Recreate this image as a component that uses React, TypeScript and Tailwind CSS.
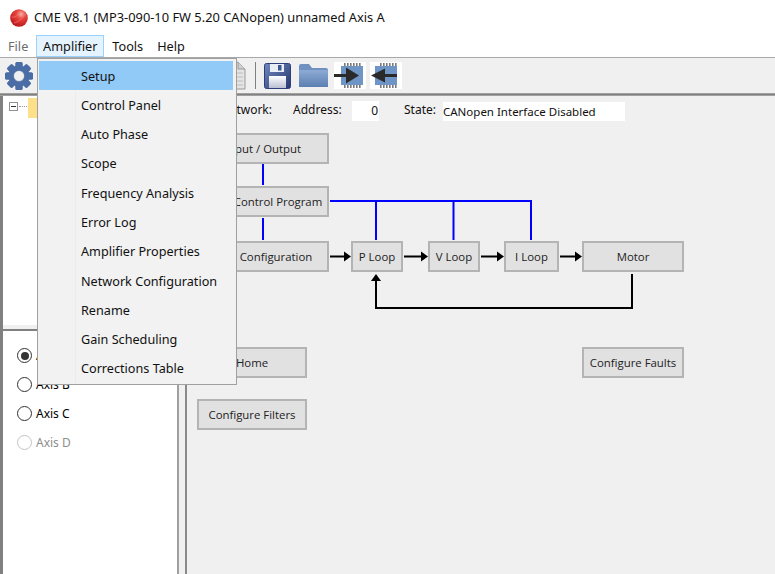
const menuItems = [
  "Setup",
  "Control Panel",
  "Auto Phase",
  "Scope",
  "Frequency Analysis",
  "Error Log",
  "Amplifier Properties",
  "Network Configuration",
  "Rename",
  "Gain Scheduling",
  "Corrections Table",
];

const blocks = [
  { label: "Input / Output", cls: "left-[10px] top-[37px] w-[132px] h-[31px]" },
  { label: "Control Program", cls: "left-[40px] top-[90px] w-[102px] h-[31px]" },
  { label: "Configuration", cls: "left-[36px] top-[145px] w-[106px] h-[31px]" },
  { label: "P Loop", cls: "left-[164px] top-[145px] w-[52px] h-[31px]" },
  { label: "V Loop", cls: "left-[241px] top-[145px] w-[52px] h-[31px]" },
  { label: "I Loop", cls: "left-[317px] top-[145px] w-[55px] h-[31px]" },
  { label: "Motor", cls: "left-[395px] top-[145px] w-[102px] h-[31px]" },
  { label: "Home", cls: "left-[10px] top-[251px] w-[110px] h-[31px]" },
  { label: "Configure Faults", cls: "left-[395px] top-[251px] w-[102px] h-[31px]" },
  { label: "Configure Filters", cls: "left-[10px] top-[303px] w-[110px] h-[31px]" },
];

const axes = [
  { label: "Axis A", checked: true },
  { label: "Axis B" },
  { label: "Axis C" },
  { label: "Axis D", disabled: true },
];

function Logo() {
  return (
    <svg width="20" height="20" viewBox="0 0 20 20">
      <defs>
        <radialGradient id="ball" cx="0.62" cy="0.28" r="0.8">
          <stop offset="0" stopColor="#f3b3aa" />
          <stop offset="0.35" stopColor="#e8453d" />
          <stop offset="1" stopColor="#b51015" />
        </radialGradient>
      </defs>
      <circle cx="10" cy="10" r="8.8" fill="url(#ball)" />
      <path d="M2.5 9C6 10 9 7 12 3M5 15C9 14 13 11 17 6" stroke="#f07a70" strokeWidth="0.7" fill="none" />
    </svg>
  );
}

function Gear() {
  const teeth = [0, 45, 90, 135, 180, 225, 270, 315];
  return (
    <svg width="30" height="30" viewBox="0 0 30 30">
      {teeth.map((a) => (
        <rect key={a} x="11.5" y="1" width="7" height="28" rx="1.5" fill="#4a6da6" transform={`rotate(${a} 15 15)`} />
      ))}
      <circle cx="15" cy="15" r="10.5" fill="#4a6da6" />
      <circle cx="15" cy="15" r="5.5" fill="#f0f0f0" />
      <circle cx="15" cy="15" r="5.5" fill="none" stroke="#3f5f96" strokeWidth="0.6" />
    </svg>
  );
}

function Chip({ dir }: { dir: "in" | "out" }) {
  const pins = [11, 14, 17, 20, 23, 26];
  return (
    <svg width="32" height="27" viewBox="0 0 32 27" className="bg-white">
      {pins.map((x) => (
        <g key={x}>
          <rect x={x - 1} y="1" width="1.6" height="3.5" fill="#7a7a7a" />
          <rect x={x - 1} y="22.5" width="1.6" height="3.5" fill="#7a7a7a" />
        </g>
      ))}
      {dir === "in" ? (
        <>
          <rect x="7" y="4" width="22" height="19" fill="#6f95c6" />
          <path d="M0 13.5H13" stroke="#2a2a2a" strokeWidth="3" />
          <path d="M12 5.5L25 13.5L12 21.5Z" fill="#2a2a2a" />
        </>
      ) : (
        <>
          <rect x="5" y="4" width="22" height="19" fill="#6f95c6" />
          <path d="M14 13.5H27" stroke="#2a2a2a" strokeWidth="3" />
          <path d="M15 6.5L1 13.5L15 20.5Z" fill="#2a2a2a" />
        </>
      )}
    </svg>
  );
}

function Toolbar() {
  return (
    <div className="relative flex h-[36px] items-center bg-[#f0f0f0] border-t border-[#a9a9a9] pl-[4px]">
      <Gear />
      {/* page icon, mostly under the open menu */}
      <svg width="20" height="30" viewBox="0 0 20 30" className="ml-[193px]">
        <path d="M1 1H11L18 8V28H1Z" fill="#e4e4e4" stroke="#9a9a9a" />
        <path d="M11 1V8H18" fill="#cfcfcf" stroke="#9a9a9a" />
        <path d="M3 12H16M3 16H16M3 20H16M3 24H16" stroke="#bdbdbd" />
      </svg>
      <div className="ml-[8px] h-[27px] w-px bg-[#808080]" />
      <svg width="27" height="26" viewBox="0 0 27 26" className="ml-[8px]">
        <defs>
          <linearGradient id="disk" x1="0" y1="0" x2="1" y2="1">
            <stop offset="0" stopColor="#7088bd" />
            <stop offset="1" stopColor="#26386f" />
          </linearGradient>
          <linearGradient id="label" x1="0" y1="0" x2="0" y2="1">
            <stop offset="0" stopColor="#ffffff" />
            <stop offset="1" stopColor="#b9c0d2" />
          </linearGradient>
        </defs>
        <rect x="0.5" y="0.5" width="26" height="25" rx="2" fill="url(#disk)" stroke="#2b3f7a" />
        <rect x="6" y="1" width="14" height="8" fill="#e9edf5" />
        <rect x="14" y="2" width="3.5" height="5.5" fill="#3c5590" />
        <rect x="5" y="13" width="17" height="12" fill="url(#label)" />
      </svg>
      <svg width="29" height="23" viewBox="0 0 29 23" className="ml-[8px]">
        <defs>
          <linearGradient id="fold" x1="0" y1="0" x2="0" y2="1">
            <stop offset="0" stopColor="#8dabd4" />
            <stop offset="1" stopColor="#5c7fb2" />
          </linearGradient>
        </defs>
        <path d="M0 2a2 2 0 0 1 2-2H10L13 4H27a2 2 0 0 1 2 2V23H0Z" fill="#6f90c0" />
        <rect x="0" y="6" width="29" height="17" rx="1" fill="url(#fold)" />
      </svg>
      <div className="ml-[6px]">
        <Chip dir="in" />
      </div>
      <div className="ml-[4px]">
        <Chip dir="out" />
      </div>
    </div>
  );
}

function Diagram() {
  return (
    <div className="relative flex-1 bg-[#f0f0f0]">
      <span className="absolute right-[503px] top-[5px] whitespace-nowrap text-[12px] text-[#111]">Network:</span>
      <span className="absolute left-[106px] top-[5px] text-[12px] text-[#111]">Address:</span>
      <div className="absolute left-[165px] top-[5px] flex h-[20px] w-[27px] items-center justify-end bg-white pr-[1px] text-[12px] text-[#111]">
        0
      </div>
      <span className="absolute left-[217px] top-[5px] text-[12px] text-[#111]">State:</span>
      <div className="absolute left-[256px] top-[6px] flex h-[19px] w-[182px] items-center bg-white text-[11.5px] text-[#111]">
        CANopen Interface Disabled
      </div>

      <svg width="588" height="280" className="absolute left-0 top-0">
        <g stroke="#0000ff" strokeWidth="2" fill="none">
          <path d="M76 68V89M76 122V144" />
          <path d="M143 105H344V144M189 105V144M266.5 105V144" />
        </g>
        <g stroke="#000" strokeWidth="2" fill="none">
          <path d="M143 160.5H160M217 160.5H237M294 160.5H313M373 160.5H391" />
          <path d="M445 178V212H189V183" />
        </g>
        <g fill="#000">
          <path d="M164 160.5L157 155.5V165.5Z" />
          <path d="M241 160.5L234 155.5V165.5Z" />
          <path d="M317 160.5L310 155.5V165.5Z" />
          <path d="M395 160.5L388 155.5V165.5Z" />
          <path d="M189 178L184 185H194Z" />
        </g>
      </svg>

      {blocks.map((b) => (
        <div
          key={b.label}
          className={`absolute ${b.cls} flex items-center justify-center border-2 border-[#b4b4b4] bg-[#e1e1e1] text-[11.4px] text-[#222] font-['Open_Sans',sans-serif]`}
        >
          {b.label}
        </div>
      ))}
    </div>
  );
}

function Sidebar() {
  return (
    <div className="flex w-[187px] shrink-0 border-r-2 border-[#8a8a8a] bg-[#f0f0f0]">
      <div className="w-[3px] bg-[#808080]" />
      <div className="flex flex-1 flex-col">
        <div className="relative h-[229px] bg-white">
          <div className="flex items-start pl-[6px] pt-[5px]">
            <div className="mt-[1px] flex h-[9px] w-[9px] items-center justify-center border border-[#919191]">
              <div className="h-px w-[5px] bg-[#333]" />
            </div>
            <div className="mt-[5px] ml-[1px] h-0 w-[8px] border-t border-dotted border-[#999]" />
            <div className="-mt-[3px] ml-[1px] h-[20px] w-[10px] bg-[#ffe08a]" />
          </div>
        </div>
        <div className="h-[6px] border-b-2 border-[#808080] bg-[#f0f0f0]" />
        <div className="mr-[6px] flex flex-1 flex-col border-r-2 border-r-[#a0a0a0] bg-white pl-[14px] pt-[10px]">
          {axes.map((a) => (
            <div key={a.label} className="flex h-[29px] items-center">
              <div
                className={`flex h-[15px] w-[15px] items-center justify-center rounded-full border-[1.5px] ${
                  a.disabled ? "border-[#c4c4c4]" : "border-[#333]"
                }`}
              >
                {a.checked && <div className="h-[8px] w-[8px] rounded-full bg-[#333]" />}
              </div>
              <span className={`ml-[4px] text-[12px] ${a.disabled ? "text-[#8d8d8d]" : "text-black"}`}>
                {a.label}
              </span>
            </div>
          ))}
        </div>
      </div>
    </div>
  );
}

export default function App() {
  return (
    <div className="relative flex h-[574px] w-[775px] flex-col overflow-hidden bg-white font-['Noto_Sans',sans-serif] text-black">
      <div className="flex h-[35px] items-center pl-[9px]">
        <Logo />
        <span className="ml-[5px] text-[12.85px] text-[#111]">CME V8.1 (MP3-090-10 FW 5.20 CANopen) unnamed Axis A</span>
      </div>

      <div className="flex h-[22px] items-stretch text-[12.7px] text-[#111]">
        <span className="flex items-center pl-[8px] pr-[8px] pt-[1px] text-[#6d6d6d]">File</span>
        <span className="flex w-[68px] items-center justify-center border border-[#99d1ff] bg-[#e5f3ff] pt-[1px]">Amplifier</span>
        <span className="flex items-center pl-[8px] pt-[1px]">Tools</span>
        <span className="flex items-center pl-[14px] pt-[1px]">Help</span>
      </div>

      <Toolbar />
      <div className="h-[3px] border-y border-[#a0a0a0] bg-[#808080]" />

      <div className="flex flex-1">
        <Sidebar />
        <Diagram />
      </div>

      <div className="absolute left-[37px] top-[58px] flex h-[327px] w-[200px] flex-col border border-[#a0a0a0] bg-[#f2f2f2] pt-[2px] pl-[1px] pr-[3px] text-[12.65px] text-[#111]">
        <div className="absolute bottom-[1px] left-[37px] top-[1px] w-px bg-[#ebebeb]" />
        {menuItems.map((item, i) => (
          <div
            key={item}
            className={`relative flex h-[29.27px] shrink-0 items-center pl-[42px] pt-[1px] ${i === 0 ? "bg-[#91c9f7]" : ""}`}
          >
            {item}
          </div>
        ))}
      </div>
    </div>
  );
}
